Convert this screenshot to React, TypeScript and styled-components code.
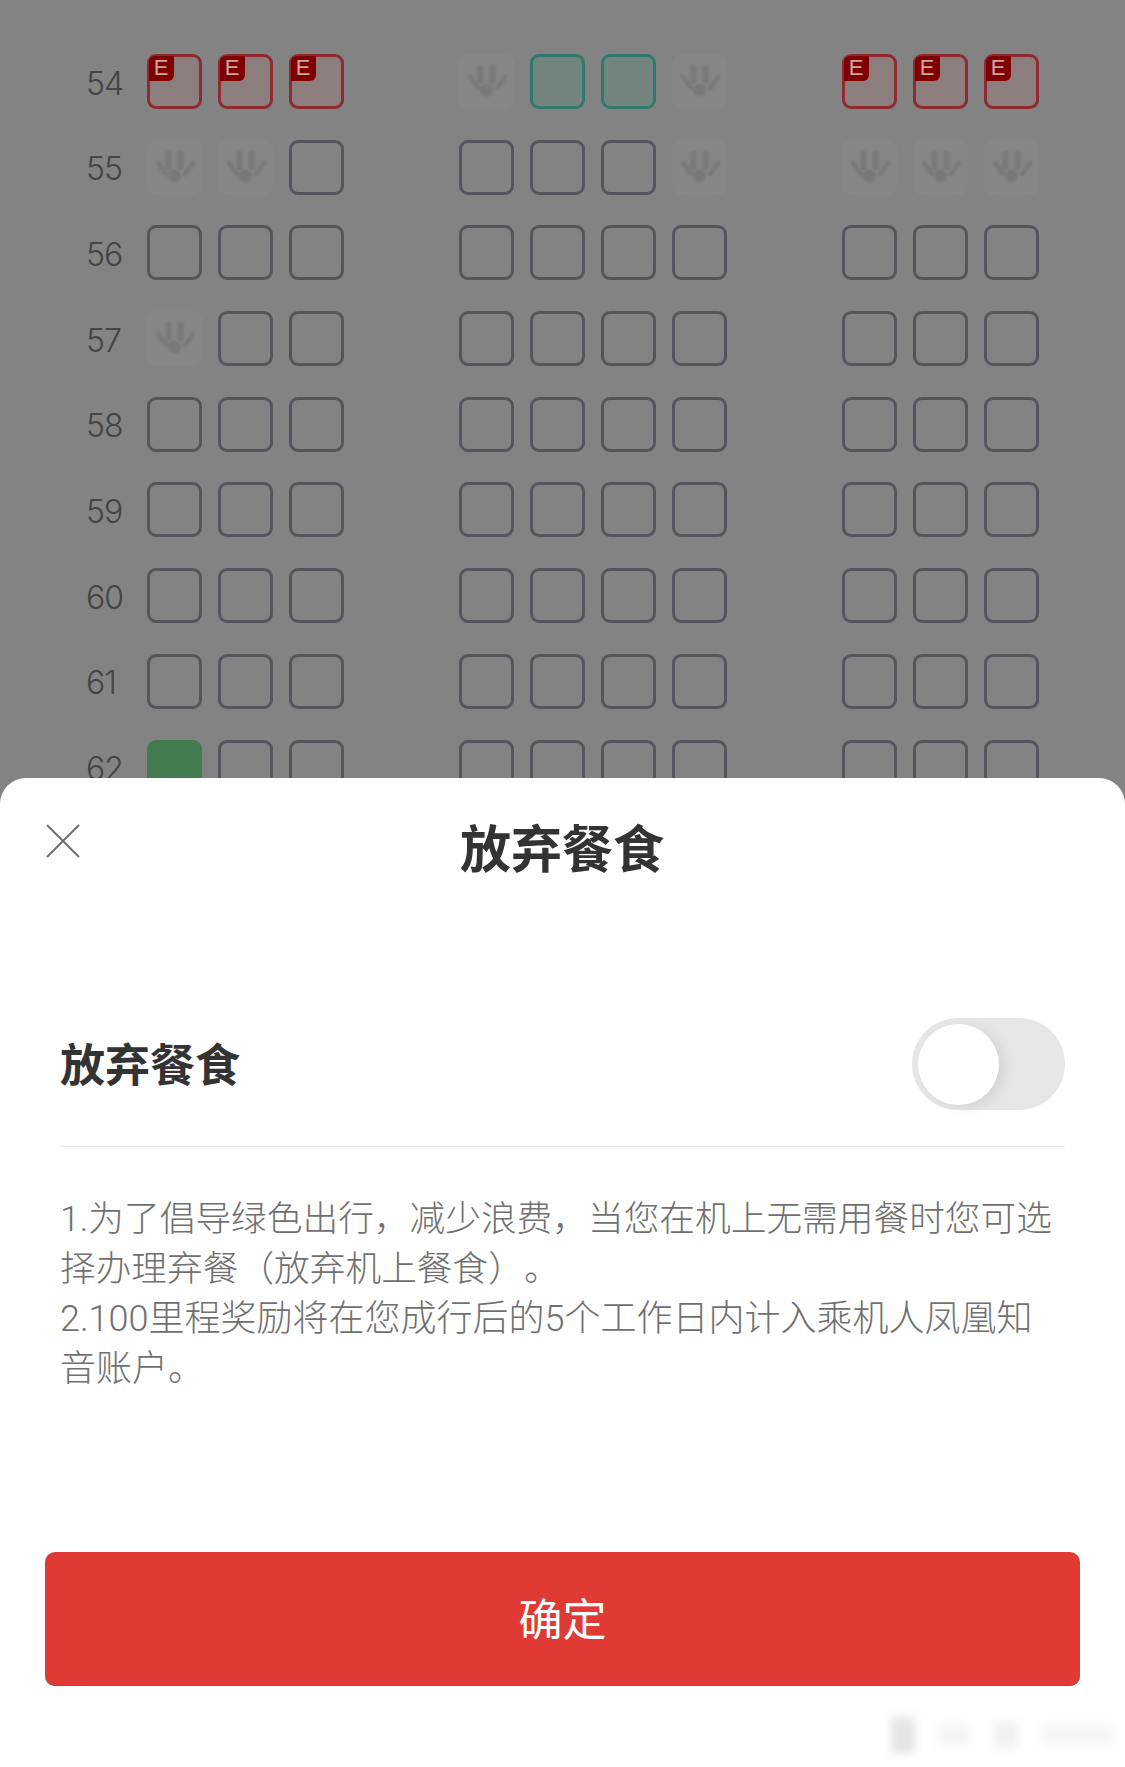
import styled, { createGlobalStyle } from "styled-components";

type SeatKind = "open" | "extra" | "taken" | "held" | "mine";

const o: SeatKind = "open";
const e: SeatKind = "extra";
const x: SeatKind = "taken";
const h: SeatKind = "held";
const m: SeatKind = "mine";

const emptyRow: SeatKind[][] = [
  [o, o, o],
  [o, o, o, o],
  [o, o, o],
];

const ROWS: { num: number; groups: SeatKind[][] }[] = [
  { num: 54, groups: [[e, e, e], [x, h, h, x], [e, e, e]] },
  { num: 55, groups: [[x, x, o], [o, o, o, x], [x, x, x]] },
  { num: 56, groups: emptyRow },
  { num: 57, groups: [[x, o, o], [o, o, o, o], [o, o, o]] },
  { num: 58, groups: emptyRow },
  { num: 59, groups: emptyRow },
  { num: 60, groups: emptyRow },
  { num: 61, groups: emptyRow },
  { num: 62, groups: [[m, o, o], [o, o, o, o], [o, o, o]] },
];

function PawIcon() {
  return (
    <PawSvg viewBox="0 0 55 55">
      <circle cx="27.5" cy="36" r="6.5" fill="currentColor" />
      <g stroke="currentColor" strokeLinecap="round" fill="none">
        <path d="M21.5 14v13M33.5 14v13" strokeWidth="6" />
        <path d="M11 23l8 11M46 23l-8 11" strokeWidth="4.5" />
      </g>
    </PawSvg>
  );
}

function Seat({ kind }: { kind: SeatKind }) {
  return (
    <SeatBox $kind={kind}>
      {kind === "extra" && <ExtraBadge>E</ExtraBadge>}
      {kind === "taken" && <PawIcon />}
    </SeatBox>
  );
}

export default function App() {
  return (
    <Page>
      <GlobalStyle />
      <SeatMap>
        {ROWS.map((row) => (
          <SeatRow key={row.num}>
            <RowNumber>{row.num}</RowNumber>
            {row.groups.map((group, i) => (
              <SeatGroup key={i}>
                {group.map((kind, j) => (
                  <Seat key={j} kind={kind} />
                ))}
              </SeatGroup>
            ))}
          </SeatRow>
        ))}
      </SeatMap>

      <Sheet>
        <SheetHeader>
          <CloseButton aria-label="关闭">
            <svg width="34" height="34" viewBox="0 0 34 34">
              <path d="M1 1l32 32M33 1L1 33" stroke="#6e6e6e" strokeWidth="2" fill="none" />
            </svg>
          </CloseButton>
          <SheetTitle>放弃餐食</SheetTitle>
        </SheetHeader>

        <SheetBody>
          <OptionRow>
            <OptionLabel>放弃餐食</OptionLabel>
            <Toggle>
              <ToggleKnob />
            </Toggle>
          </OptionRow>
          <Notes>
            <NoteLine $size={35.7}>1.为了倡导绿色出行，减少浪费，当您在机上无需用餐时您可选择办理弃餐（放弃机上餐食）。</NoteLine>
            <NoteLine $size={36}>2.100里程奖励将在您成行后的5个工作日内计入乘机人凤凰知音账户。</NoteLine>
          </Notes>
        </SheetBody>

        <ConfirmButton>确定</ConfirmButton>
        <Watermark aria-hidden="true">
          <WatermarkBlob $w={24} $h={36} $shade="#e4e4e4" />
          <WatermarkBlob $w={34} $h={22} $shade="#f6f6f6" />
          <WatermarkBlob $w={26} $h={26} $shade="#f1f1f1" />
          <WatermarkBlob $w={74} $h={22} $shade="#f7f7f7" />
        </Watermark>
      </Sheet>
    </Page>
  );
}

const GlobalStyle = createGlobalStyle`
  html, body {
    margin: 0;
    padding: 0;
    background: #838383;
  }
`;

const Page = styled.div`
  position: relative;
  width: 1125px;
  height: 1767px;
  overflow: hidden;
  background: #838383;
  font-family: "Noto Sans CJK SC", "Noto Sans", sans-serif;
`;

const SeatMap = styled.div`
  display: flex;
  flex-direction: column;
  gap: 30.7px;
  padding: 54px 0 0 86px;
`;

const SeatRow = styled.div`
  display: flex;
  align-items: center;
  height: 55px;
  gap: 115px;
`;

const RowNumber = styled.div`
  width: 60.5px;
  margin-right: -115px;
  padding-top: 3px;
  font-family: Inter, "Liberation Sans", sans-serif;
  font-weight: 300;
  font-size: 32px;
  letter-spacing: -1px;
  color: #444;
`;

const SeatGroup = styled.div`
  display: flex;
  gap: 16px;
`;

const seatStyles: Record<SeatKind, string> = {
  open: "border: 3px solid #55555e; background: transparent;",
  extra: "border: 3px solid #8f2b30; background: #8d7e7e;",
  taken: "border: 3px solid #868686; background: #868686;",
  held: "border: 3px solid #2f7a6c; background: #74847f;",
  mine: "border: 3px solid #427c50; background: #427c50;",
};

const SeatBox = styled.div<{ $kind: SeatKind }>`
  position: relative;
  box-sizing: border-box;
  width: 55px;
  height: 55px;
  border-radius: 9px;
  ${(p) => seatStyles[p.$kind]}
`;

const ExtraBadge = styled.span`
  position: absolute;
  top: -1px;
  left: -1px;
  width: 25px;
  height: 25px;
  border-radius: 6px 0 6px 0;
  background: #7e0000;
  color: #cfa3a0;
  font-family: "Liberation Sans", sans-serif;
  font-size: 22px;
  line-height: 24px;
  text-align: center;
`;

const PawSvg = styled.svg`
  position: absolute;
  top: -3px;
  left: -3px;
  width: 55px;
  height: 55px;
  color: #797979;
  filter: blur(1px);
`;

const Sheet = styled.section`
  position: absolute;
  left: 0;
  right: 0;
  bottom: 0;
  height: 989px;
  box-sizing: border-box;
  display: flex;
  flex-direction: column;
  padding: 0 45px;
  background: #fff;
  border-radius: 26px 26px 0 0;
`;

const SheetHeader = styled.header`
  position: relative;
  display: flex;
  justify-content: center;
  padding-top: 31px;
  margin-right: 1px;
`;

const CloseButton = styled.button`
  position: absolute;
  top: 46px;
  left: 1px;
  padding: 0;
  border: 0;
  background: none;
  line-height: 0;
`;

const SheetTitle = styled.h1`
  margin: 0;
  font-size: 51px;
  line-height: 74px;
  font-weight: 700;
  color: #333;
`;

const SheetBody = styled.div`
  display: flex;
  flex-direction: column;
  flex: 1;
  padding: 135px 15px 0;
`;

const OptionRow = styled.div`
  display: flex;
  align-items: center;
  justify-content: space-between;
  height: 92px;
  padding-bottom: 36px;
  border-bottom: 1px solid #ececec;
`;

const OptionLabel = styled.div`
  font-size: 45px;
  line-height: 60px;
  margin-top: -2px;
  font-weight: 700;
  color: #333;
`;

const Toggle = styled.div`
  display: flex;
  align-items: center;
  box-sizing: border-box;
  width: 153px;
  height: 92px;
  padding: 0 6px;
  border-radius: 46px;
  background: #e6e6e6;
`;

const ToggleKnob = styled.div`
  width: 81px;
  height: 81px;
  border-radius: 50%;
  background: #fff;
  box-shadow: 6px 3px 12px rgba(0, 0, 0, 0.08);
`;

const Notes = styled.div`
  margin-top: 47px;
  padding-right: 4px;
  font-family: Roboto, "Noto Sans CJK SC", sans-serif;
  font-weight: 300;
  line-height: 50px;
  color: #707070;
  text-spacing-trim: space-all;
`;

const NoteLine = styled.p<{ $size: number }>`
  margin: 0;
  font-size: ${(p) => p.$size}px;
`;

const ConfirmButton = styled.button`
  flex-shrink: 0;
  width: 1035px;
  height: 134px;
  margin-bottom: 81px;
  padding: 0 0 4px;
  border: 0;
  border-radius: 10px;
  background: #e03a35;
  box-shadow: inset 0 -1px 0 #b9423e;
  color: #fff;
  font-family: inherit;
  font-size: 44px;
`;

const Watermark = styled.div`
  position: absolute;
  right: 10px;
  bottom: 14px;
  display: flex;
  align-items: center;
  gap: 22px;
  filter: blur(5px);
`;

const WatermarkBlob = styled.span<{ $w: number; $h: number; $shade: string }>`
  display: block;
  width: ${(p) => p.$w}px;
  height: ${(p) => p.$h}px;
  background: ${(p) => p.$shade};
`;
